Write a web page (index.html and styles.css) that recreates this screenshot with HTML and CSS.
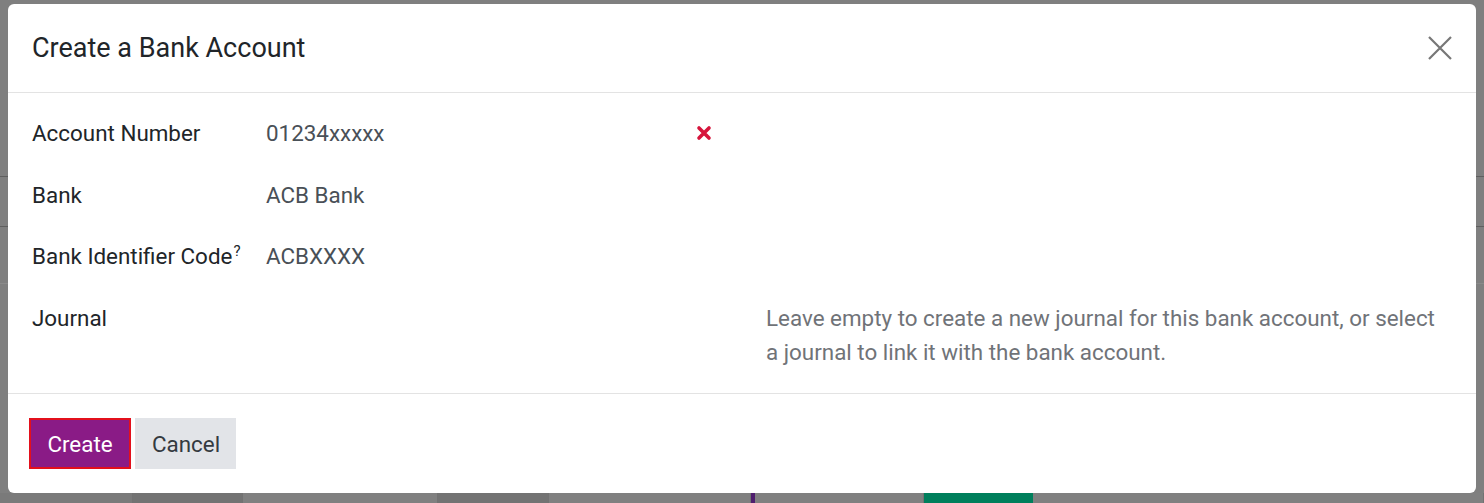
FILE: index.html
```html
<!DOCTYPE html>
<html lang="en">
<head>
  <meta charset="UTF-8">
  <title>Create a Bank Account</title>
  <link rel="stylesheet" href="styles.css">
</head>
<body>
  <div class="page">
    <div class="page-rule rule-1"></div>
    <div class="page-rule rule-2"></div>
    <div class="page-rule rule-3"></div>
    <div class="page-footer">
      <span class="cell cell-a"></span>
      <span class="cell cell-b"></span>
      <span class="cell cell-c"></span>
      <span class="cell cell-d"></span>
      <span class="cell cell-e"></span>
      <span class="cell cell-purple"></span>
      <span class="cell cell-f"></span>
      <span class="cell cell-green"></span>
      <span class="cell cell-g"></span>
    </div>
  </div>

  <div class="modal">
    <header class="modal-header">
      <h4 class="modal-title">Create a Bank Account</h4>
      <button class="btn-close" aria-label="Close">
        <svg width="24" height="24" viewBox="0 0 24 24">
          <path d="M1 1 L23 23 M23 1 L1 23" stroke="#777" stroke-width="2.2" fill="none"/>
        </svg>
      </button>
    </header>

    <main class="modal-body">
      <div class="form-grid">
        <label class="form-label">Account Number</label>
        <div class="form-field">
          <span>01234xxxxx</span>
          <svg class="clear-icon" width="16" height="16" viewBox="0 0 16 16">
            <path d="M3 3 L13 13 M13 3 L3 13" stroke="#d6153c" stroke-width="3.6" stroke-linecap="round" fill="none"/>
          </svg>
        </div>
        <div></div>

        <label class="form-label">Bank</label>
        <div class="form-field"><span>ACB Bank</span></div>
        <div></div>

        <label class="form-label">Bank Identifier Code<sup>?</sup></label>
        <div class="form-field"><span>ACBXXXX</span></div>
        <div></div>

        <label class="form-label">Journal</label>
        <div class="form-field"></div>
        <p class="form-help">Leave empty to create a new journal for this bank account, or select a journal to link it with the bank account.</p>
      </div>
    </main>

    <footer class="modal-footer">
      <button class="btn btn-primary">Create</button>
      <button class="btn btn-secondary">Cancel</button>
    </footer>
  </div>
</body>
</html>
```

FILE: styles.css
```css
html, body {
  margin: 0;
  padding: 0;
}

body {
  font-family: Roboto, "Liberation Sans", Arial, sans-serif;
  background-color: #7f7f7f;
  color: #212529;
}

.page {
  height: 503px;
  display: flex;
  flex-direction: column;
  position: relative;
  overflow: hidden;
}

.page-rule {
  position: absolute;
  left: 0;
  right: 0;
  height: 1px;
  background-color: #5f5f5f;
}

.rule-1 { top: 176px; }
.rule-2 { top: 226px; }
.rule-3 { top: 283px; background-color: #8a8a8a; }

.page-footer {
  margin-top: auto;
  height: 10px;
  display: flex;
}

.cell {
  display: block;
  height: 10px;
  border-right: 1px solid #727272;
  background-color: #808080;
}

.cell-a { width: 132px; background-color: #7a7a7a; }
.cell-b { width: 109px; background-color: #737373; }
.cell-c { width: 194px; }
.cell-d { width: 110px; background-color: #737373; }
.cell-e { width: 201px; }
.cell-purple { width: 4px; background-color: #4f1e6e; border-right: none; }
.cell-f { width: 168px; }
.cell-green { width: 109px; background-color: #007f5c; border-right: none; }
.cell-g { flex: 1; }

/* Dialog */

.modal {
  position: absolute;
  top: 4px;
  left: 8px;
  width: 1468px;
  height: 489px;
  background-color: #fff;
  border-radius: 6px;
  display: flex;
  flex-direction: column;
}

.modal-header {
  height: 88px;
  padding: 0 24px;
  display: flex;
  align-items: center;
  justify-content: space-between;
  border-bottom: 1px solid #e3e3e3;
}

.modal-title {
  margin: 0;
  font-size: 27px;
  font-weight: 400;
  color: #212529;
}

.btn-close {
  border: none;
  background: none;
  padding: 0;
  width: 24px;
  height: 24px;
  cursor: pointer;
}

.btn-close svg {
  display: block;
}

.modal-body {
  flex: 1;
  padding: 23px 24px 0 24px;
}

.form-grid {
  display: grid;
  grid-template-columns: 234px 500px 1fr;
  row-gap: 27.6px;
  font-size: 22.4px;
  line-height: 34px;
}

.form-label {
  color: #212529;
  white-space: nowrap;
}

.form-label sup {
  font-size: 15px;
  line-height: 0;
  margin-left: 1px;
}

.form-field {
  display: flex;
  align-items: center;
  justify-content: space-between;
  padding-right: 54px;
  color: #495057;
}

.clear-icon {
  display: block;
}

.form-help {
  margin: 0;
  color: #707378;
}

.modal-footer {
  height: 99px;
  padding: 0 21px;
  display: flex;
  align-items: center;
  gap: 4px;
  border-top: 1px solid #e3e3e3;
}

.btn {
  font-family: inherit;
  font-size: 22.4px;
  line-height: 34px;
  height: 51px;
  padding: 0 17px;
  border: none;
  cursor: pointer;
}

.btn-primary {
  background-color: #8a1b86;
  color: #fff;
  border: 2px solid #e3101c;
  padding: 0 15px;
  width: 102px;
}

.btn-secondary {
  background-color: #e2e4e8;
  color: #343a40;
  width: 101px;
}
```
